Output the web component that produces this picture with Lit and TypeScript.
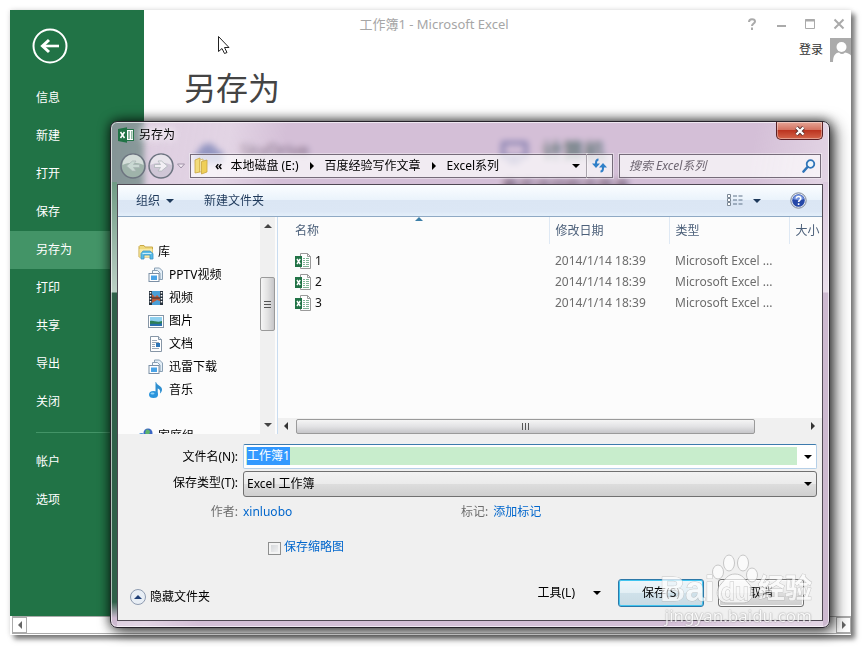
import { LitElement, html, css, svg } from "lit";
import { customElement, query } from "lit/decorators.js";
import { classMap } from "lit/directives/class-map.js";

const menu = ["信息", "新建", "打开", "保存", "另存为", "打印", "共享", "导出", "关闭"];
const accountMenu = ["帐户", "选项"];
const files = ["1", "2", "3"];

const stack = svg`
  <path d="M6.500 1h5l3 3v8.500h-8z" fill="#e3eef7" stroke="#8aa0b4"/>
  <path d="M4.500 3.500h5l2.500 2.500v6.500H4.500z" fill="#f6fafd" stroke="#8aa0b4"/>
  <rect x="1" y="6.500" width="10" height="8" fill="#fff" stroke="#7b8fa5"/>
  <rect x="3" y="8.500" width="6" height="4.500" fill="#4aa3e6"/>`;
const icons = {
  library: svg`
    <path d="M1 2.500 2 1.500h4l1 1.500h7.500v10H1z" fill="#efd97c" stroke="#c9a948"/>
    <path d="M1.500 5h13v8h-13z" fill="#f8e9a4"/>
    <path d="M3 15V9.500L5 7h7l3 2.500V15h-3v-4H6v4z" fill="#58bce8" stroke="#3a93c4" stroke-width=".8"/>
    <path d="M4.500 9.500h9" stroke="#c8effc"/>`,
  stack,
  video: svg`
    <rect x="1" y="1" width="14" height="14" fill="#26313c"/>
    <rect x="4" y="1" width="8" height="14" fill="#4b9fd6"/>
    <path d="M4 4l3 3 2-2 3 3v3l-3-1-5 3z" fill="#c25a35"/>
    <path d="M4 8h8" stroke="#26313c"/>
    <path d="M2.500 2v12M13.500 2v12" stroke="#fff" stroke-width="1.500" stroke-dasharray="1.500 1.500"/>`,
  picture: svg`
    <rect x=".5" y="2.500" width="15" height="12" fill="#fff" stroke="#8796a6"/>
    <rect x="2" y="4" width="12" height="9" fill="#8fd0ef"/>
    <path d="M2 8c4-1 7 2 12 0v5H2z" fill="#2e7f57"/>
    <path d="M2 11c4-1 8 1 12-1v3H2z" fill="#2a6fae"/>`,
  document: svg`
    <path d="M2.500.5h8l3 3v12h-11z" fill="#fff" stroke="#8796a6"/>
    <path d="M10.500.5v3h3" fill="#dfe8f0" stroke="#8796a6"/>
    <path d="M4 4.500h5M4 6.500h7M4 8.500h3M4 10.500h3M4 12.500h7" stroke="#9aa9b8"/>
    <rect x="8" y="7" width="4" height="4" fill="#2f77b8"/>`,
  music: svg`
    <path d="M8 0c1 3.500 6 4 6 7.500 0 1.700-.8 3-2 4 .7-3-.5-4.500-2.300-5V13H7.500V0z" fill="#2f8fd0"/>
    <ellipse cx="5.500" cy="12.500" rx="4.500" ry="3.500" fill="#2a94dc"/>
    <ellipse cx="4.500" cy="11.500" rx="2" ry="1" fill="#8fd3f8"/>`,
  homegroup: svg`
    <circle cx="10" cy="5" r="4.500" fill="#3b66c4"/>
    <path d="M8 2c2-1 4 0 4 2s-2 2-2 3-2-1-3-2z" fill="#5db46d"/>
    <circle cx="3.500" cy="8" r="3" fill="#4a90d8"/>`,
};

const tree: { icon: keyof typeof icons; label: string }[] = [
  { icon: "stack", label: "PPTV视频" },
  { icon: "video", label: "视频" },
  { icon: "picture", label: "图片" },
  { icon: "document", label: "文档" },
  { icon: "stack", label: "迅雷下载" },
  { icon: "music", label: "音乐" },
];

const small = (name: keyof typeof icons) =>
  html`<svg width="16" height="16" viewBox="0 0 16 16" aria-hidden="true">${icons[name]}</svg>`;
const tri = (dir: "down" | "up" | "left" | "right") => {
  const d = { down: "M0 2h8L4 6z", up: "M0 6h8L4 2z", left: "M6 0v8L2 4z", right: "M2 0v8l4-4z" }[dir];
  return html`<svg class="tri" width="8" height="8" viewBox="0 0 8 8" aria-hidden="true"><path d=${d} fill="currentColor"/></svg>`;
};

@customElement("app-root")
export class AppRoot extends LitElement {
  @query(".name-input") nameInput!: HTMLInputElement;

  static styles = css`
    :host {
      display: block;
      font: 12px/20px "Noto Sans", "Noto Sans CJK SC", sans-serif;
      color: #1a1a1a;
    }
    * { box-sizing: border-box; }
    svg { display: block; flex: none; }
    a { color: inherit; text-decoration: none; }
    button, input, select { font: inherit; color: inherit; margin: 0; padding: 0; border: 0; background: none; }
    ul { list-style: none; margin: 0; padding: 0; }

    .desk { display: grid; min-height: 100vh; padding: 10px 11px 12px 10px; background: #fff; overflow: hidden; }
    .window {
      position: relative; display: flex; flex-direction: column; background: #fff;
      box-shadow: 4px 4px 5px #777, 0 0 5px #ddd;
    }
    .backstage { flex: 1; display: flex; }
    .side { width: 134px; background: #217346; color: #fff; }
    .back { display: block; margin: 18px 0 15px 22px; }
    .back svg { width: 36px; height: 36px; }
    .side a { display: block; line-height: 38px; padding-left: 26px; }
    .side a.on { background: #439467; }
    .side hr { margin: 11px 0 10px 26px; border: 0; height: 1px; background: #439467; }

    .main { flex: 1; min-width: 0; display: flex; flex-direction: column; }
    .caption { display: flex; align-items: center; height: 28px; color: #a6a6a6; padding-right: 6px; margin-left: -134px; }
    .caption .name { flex: 1; text-align: center; padding-left: 112px; font-size: 13px; }
    .sys { display: flex; gap: 17px; }
    .sys button { width: 12px; height: 12px; }
    .login { display: flex; justify-content: flex-end; align-items: center; gap: 7px; height: 24px; color: #333; }
    h1 { font-size: 32px; line-height: 48px; font-weight: 400; margin: 2px 0 0 40px; color: #444; }
    .places { display: flex; margin: 28px 0 0 46px; font-size: 17px; color: #444; }
    .place { display: flex; flex: 0 0 308px; gap: 12px; }
    .place strong { font-size: 21px; color: #217346; }
    .place em { display: block; font-size: 16px; font-style: normal; margin: 14px 0 0 -40px; font-weight: 700; }

    .pagebar { display: flex; align-items: center; justify-content: space-between; height: 18px; border-top: 1px solid #ababab; border-bottom: 1px solid #ababab; margin: 0 0 1px 2px; color: #666; }
    .pagebar button { display: grid; place-items: center; width: 15px; height: 16px; border: 1px solid #ababab; }

    .dialog {
      position: absolute; left: 100px; right: 21px; top: 111px;
      padding: 0 6px 6px; border: 1px solid #26222a; border-radius: 7px;
      background:
        linear-gradient(#6f9a84, #bccfc5 110px, #2f6049 111px, #2f6049 420px, #cdb9d0 436px) 0 60px / 6px 100% no-repeat,
        linear-gradient(#dccadf, #eadfeb 110px, #cdb9d0 111px) 100% 60px / 6px 100% no-repeat,
        linear-gradient(100deg, #fff3, #fff5 15%, #fff0 22%, #fff0 80%, #fff5 90%),
        #aa80af80;
      backdrop-filter: blur(3px);
      box-shadow: inset 0 0 0 1px #ffffffa0, 0 0 12px #000b, 5px 3px 16px #0009;
    }
    .titlebar { display: flex; align-items: flex-start; height: 25px; }
    .titlebar svg.app { margin: 5px 0 0 1px; }
    .titlebar h2 { flex: 1; margin: 3px 0 0 5px; font: inherit; color: #000; text-shadow: 0 0 8px #fff, 0 0 6px #fff; }
    .close {
      display: grid; place-items: center; width: 47px; height: 18px;
      border: 1px solid #5a2024; border-top: 0; border-radius: 0 0 5px 5px;
      background: linear-gradient(#e6a596, #d2705e 48%, #bc3420 50%, #d4644a);
      box-shadow: inset 0 0 0 1px #ffffff60;
    }
    .nav { display: flex; align-items: center; height: 37px; padding: 0 2px 0 3px; }
    .round { margin-right: 2px; }
    .nav .recent { color: #9f92a6; margin: 0 5px 0 1px; }
    .box { display: flex; align-items: center; height: 24px; border: 1px solid #766c7a; background: #ffffffb0; box-shadow: 0 0 0 1px #ffffff60; }
    .address { flex: 1; min-width: 0; padding: 0 6px 0 3px; white-space: nowrap; color: #000; }
    .address svg.folder { margin-right: 6px; }
    .crumb { display: flex; align-items: center; }
    .crumb .tri { margin: 0 9px; }
    .address .spacer { flex: 1; }
    .laquo { margin-right: 8px; font-weight: 700; }
    .refresh { width: 26px; border-left: 0; justify-content: center; margin-right: 6px; }
    .search { width: 202px; padding: 0 4px 0 9px; }
    .search input { flex: 1; min-width: 0; font-style: italic; outline: 0; }
    .search input::placeholder { color: #6e6672; opacity: 1; }

    .client { border: 1px solid #4f4853; background: #f0f0f0; overflow: hidden; }
    .tools {
      display: flex; align-items: center; height: 32px; padding: 0 15px 0 18px; color: #1e395b;
      background: linear-gradient(#fbfdff, #eaf3fb 48%, #dbe6f4 50%, #dce7f5 85%, #e4effa);
      border-bottom: 1px solid #8fa9c4;
    }
    .tools button { display: flex; align-items: center; gap: 6px; }
    .tools .new { flex: 1; margin-left: 30px; }
    .tools .view { gap: 10px; margin-right: 29px; }

    .body { display: flex; height: 217px; background: #fcfcfc; }
    .tree { width: 142px; overflow: hidden; padding-top: 23px; color: #000; }
    .tree li { display: flex; align-items: center; height: 23px; gap: 5px; padding-left: 30px; white-space: nowrap; }
    .tree li.root { padding-left: 20px; gap: 4px; }
    .tree li.group { padding-left: 20px; gap: 4px; margin-top: 23px; }
    .vbar { display: flex; flex-direction: column; align-items: center; width: 15px; background: #f0f0f0; color: #444; padding: 5px 0; }
    .vthumb { width: 15px; height: 54px; margin: 47px 0 auto; border: 1px solid #9a9a9a; border-radius: 2px; background: linear-gradient(90deg, #f6f6f6, #e2e2e2 50%, #c6c6c9); display: grid; place-items: center; }
    .list { flex: 1; min-width: 0; margin-left: 2px; border-left: 1px solid #c9dcf0; display: flex; flex-direction: column; overflow: hidden; }
    table { width: 100%; border-collapse: collapse; table-layout: fixed; }
    th, td { padding: 0 0 0 6px; text-align: left; font-weight: 400; white-space: nowrap; overflow: hidden; color: #6d6d6d; }
    th { height: 27px; color: #4c607a; border-right: 1px solid #dfe9f4; position: relative; }
    th:last-child { border-right: 0; }
    th:first-child, td:first-child { padding-left: 17px; }
    th .sort { position: absolute; left: 137px; top: 0; color: #3c7fa8; }
    .gap td { height: 6px; }
    td { height: 21px; }
    td .file { display: flex; align-items: center; gap: 4px; color: #111; }
    .c-mid { width: 120px; }
    .c-end { width: 33px; }
    .hbar { display: flex; align-items: center; height: 16px; margin-top: auto; padding: 0 5px 0 4px; background: #f0f0f0; color: #333; }
    .hthumb { width: 459px; height: 15px; margin: 0 auto 0 6px; border: 1px solid #9a9a9a; border-radius: 2px; background: linear-gradient(#f5f5f5, #e2e2e4 50%, #c6c6c9); display: grid; place-items: center; }

    form { display: grid; grid-template-columns: 120px minmax(0, 1fr); column-gap: 5px; padding: 10px 5px 13px 0; color: #000; }
    form > label, .dim { text-align: right; align-self: center; }
    .dim { color: #6d6d6d; }
    .combo { display: flex; height: 25px; padding: 2px; border: 1px solid #b5cfe7; border-top-color: #3d7bad; background: #fff; border-radius: 2px; }
    .name-input { flex: 1; min-width: 0; height: 18px; padding-left: 1px; background: #c8edcc; outline: 0; caret-color: transparent; }
    .name-input::selection { background: #3399ff; color: #fff; }
    .combo button { width: 17px; display: grid; place-items: center end; padding-right: 2px; }
    .pick { position: relative; display: grid; align-items: center; margin-top: 2px; }
    select { appearance: none; width: 100%; height: 26px; padding-left: 3px; border: 1px solid #707070; border-radius: 3px; background: linear-gradient(#f2f2f2, #ebebeb 48%, #dddddd 50%, #cfcfcf); outline: 0; }
    .pick .tri { position: absolute; right: 5px; pointer-events: none; }
    .meta { display: flex; height: 29px; align-items: center; }
    .meta span { color: #6d6d6d; margin-right: 5px; }
    .meta a { color: #0066cc; }
    .meta .author { width: 218px; }
    .thumb { grid-column: 2; display: flex; align-items: center; gap: 3px; margin: 11px 0 22px 25px; height: 20px; color: #0066cc; }
    .thumb input { appearance: none; width: 13px; height: 13px; border: 1px solid #8e8f8f; background: linear-gradient(135deg, #cfd2d6, #f6f6f6); box-shadow: inset 0 0 0 2px #f4f4f4; margin-top: 2px; }
    .foot { grid-column: 1 / -1; display: flex; align-items: center; height: 28px; padding: 0 13px 0 12px; }
    .hide { display: flex; align-items: center; gap: 4px; flex: 1; align-self: flex-end; }
    .more { display: flex; align-items: center; gap: 18px; margin-right: 17px; }
    .btn { width: 86px; height: 28px; border: 1px solid #707070; border-radius: 3px; background: linear-gradient(#f3f3f3, #ebebeb 48%, #dddddd 50%, #cfcfcf); box-shadow: inset 0 0 0 1px #fcfcfc; margin-left: 14px; }
    .btn.primary { margin-left: 0; border-color: #2c78a8; box-shadow: inset 0 0 0 1px #41c5f0; background: linear-gradient(#eef6fa, #e3eff5 48%, #cfe1ea 50%, #c9dbe4); }

    .mark { position: absolute; right: 17px; bottom: 1px; width: 152px; color: #fff; opacity: .7; pointer-events: none; font-family: "Liberation Sans", "Noto Sans CJK SC", sans-serif; }
    .mark .row { display: flex; align-items: flex-end; justify-content: space-between; height: 52px; }
    .mark b { -webkit-text-stroke: 1px #b4b4b4; paint-order: stroke fill; }
    .mark .bai { font-size: 35px; line-height: 34px; }
    .mark .cn { font-size: 27px; line-height: 34px; }
    .mark .paw { position: absolute; left: 50px; top: 0; }
    .mark .du { position: absolute; left: 61px; top: 24px; font-size: 23px; line-height: 28px; }
    .mark .url { font: 17px/20px "Noto Sans", sans-serif; text-align: right; white-space: nowrap; text-shadow: 0 0 1px #888, 0 0 2px #888; }
    .pointer { position: absolute; left: 207px; top: 25px; }
  `;

  firstUpdated() {
    this.nameInput.focus();
    this.nameInput.select();
  }

  private sheet() {
    return html`<svg width="16" height="16" viewBox="0 0 16 16" aria-hidden="true">
      <path d="M5.500.5h7l3 3v12h-10z" fill="#fff" stroke="#9a9a9a"/>
      <path d="M12.500.5v3h3" fill="none" stroke="#9a9a9a"/>
      <path d="M8 5.500h2M8 7.500h2M8 9.500h2M8 11.500h2M11 5.500h3M11 7.500h3M11 9.500h3M11 11.500h3M8 13.500h6" stroke="#7fb495"/>
      <path d="M0 3h7v11H0z" fill="#217346"/>
      <path d="M2 6l3.200 5M5.200 6 2 11" stroke="#fff" stroke-width="1.400"/>
    </svg>`;
  }

  private round(forward: boolean) {
    const d = forward
      ? "M6.500 11.500h6L10 8h3.500l6 5-6 5H10l2.500-3.500h-6z"
      : "M19.500 11.500h-6L16 8h-3.500l-6 5 6 5H16l-2.500-3.500h6z";
    return html`<button class="round" type="button" aria-label=${forward ? "前进" : "后退"}>
      <svg width="26" height="26" viewBox="0 0 26 26">
        <circle cx="13" cy="13" r="12" fill=${forward ? "#cfc6d6" : "#9fb3aa"} stroke="#6d7480" stroke-width="1.500"/>
        <path d="M2.500 12a10.500 10.500 0 0 1 21 0c-6-3-15-3-21 0z" fill="#fff" fill-opacity=".55"/>
        <path d=${d} fill=${forward ? "#f2eff4" : "#c9d8d2"} stroke="#a9b3b5" stroke-width=".7"/>
      </svg>
    </button>`;
  }

  private renderDialog() {
    return html`<section class="dialog" role="dialog" aria-label="另存为">
      <header class="titlebar">
        <svg class="app" width="16" height="16" viewBox="0 0 16 16">
          <rect x="8" y="2.500" width="7.500" height="11" fill="#fff" stroke="#217346"/>
          <path d="M10 5h2M10 7h2M10 9h2M10 11h2M13 5h1.500M13 7h1.500M13 9h1.500M13 11h1.500" stroke="#217346"/>
          <path d="M0 2 9 .3v15.400L0 14z" fill="#217346"/>
          <path d="M2.500 5l4 6M6.500 5l-4 6" stroke="#fff" stroke-width="1.500"/>
        </svg>
        <h2>另存为</h2>
        <button class="close" type="button" aria-label="关闭">
          <svg width="12" height="10" viewBox="0 0 12 10"><path d="M2.500 1.500l7 7M9.500 1.500l-7 7" stroke="#5a3030" stroke-width="4"/><path d="M2.500 1.500l7 7M9.500 1.500l-7 7" stroke="#fff" stroke-width="2.400"/></svg>
        </button>
      </header>

      <div class="nav">
        ${this.round(false)}${this.round(true)}
        <span class="recent"><svg width="8" height="8" viewBox="0 0 8 8"><path d="M.5 2h7L4 6z" fill="#f3eaf4" stroke="#9f92a6"/></svg></span>
        <div class="box address">
          <svg class="folder" width="15" height="18" viewBox="0 0 15 18">
            <path d="M1 3l5-2v14l-5 1z" fill="#f3dc7a" stroke="#c9a640" stroke-width=".8"/>
            <path d="M6 3l3-1v13H6z" fill="#fff8d0" stroke="#c9a640" stroke-width=".6"/>
            <path d="M7.500 4.500 13 3v12l-5.500 2z" fill="#efcf58" stroke="#c9a640" stroke-width=".8"/>
          </svg>
          <span class="laquo">«</span>
          <span class="crumb">本地磁盘 (E:)${tri("right")}</span>
          <span class="crumb">百度经验写作文章${tri("right")}</span>
          <span class="crumb">Excel系列</span>
          <span class="spacer"></span>
          ${tri("down")}
        </div>
        <button class="box refresh" type="button" aria-label="刷新">
          <svg width="15" height="15" viewBox="0 0 15 15" fill="none" stroke="#2f7fc8" stroke-width="2">
            <path d="M6.500 1.500C4.500 1.500 4 3 4 5v2"/><path d="M0 5.500h8L4 10z" fill="#2f7fc8" stroke="none"/>
            <path d="M8.500 13.500c2 0 2.500-1.500 2.500-3.500V8"/><path d="M7 9.500h8L11 5z" fill="#2f7fc8" stroke="none"/>
          </svg>
        </button>
        <label class="box search">
          <input type="text" aria-label="搜索" placeholder="搜索 Excel系列" />
          <svg width="14" height="14" viewBox="0 0 14 14" fill="none" stroke="#2f74b8" stroke-width="1.800"><circle cx="8.500" cy="5" r="3.800" fill="#eef6fc"/><path d="M5.500 8 1.500 12.500" stroke-width="2.600" stroke-linecap="round"/></svg>
        </label>
      </div>

      <div class="client">
        <div class="tools">
          <button type="button">组织 ${tri("down")}</button>
          <button type="button" class="new">新建文件夹</button>
          <button type="button" class="view" aria-label="更改视图">
            <svg width="16" height="13" viewBox="0 0 16 13"><path d="M.5.500h3v3h-3zM.5 4.500h3v3h-3zM.5 8.500h3v3h-3z" fill="#fff" stroke="#7a8794"/><path d="M6 2h4M11.500 2h4M6 6h4M11.500 6h4M6 10h4M11.500 10h4" stroke="#5f7388"/></svg>
            ${tri("down")}
          </button>
          <button type="button" aria-label="帮助">
            <svg width="17" height="17" viewBox="0 0 17 17"><circle cx="8.500" cy="8.500" r="7.700" fill="#e9edf4" stroke="#7c8698"/><circle cx="8.500" cy="8.500" r="6.300" fill="#2648a8"/><path d="M3 7a5.700 5.700 0 0 1 11 0c-3 1.500-8 1.500-11 0z" fill="#6f8fdc"/><path d="M6.300 6.600c0-3 4.500-2.700 4.500-.2 0 1.600-2.200 1.700-2.200 3.500M8.600 11.200v1.800" fill="none" stroke="#fff" stroke-width="1.600"/></svg>
          </button>
        </div>

        <div class="body">
          <ul class="tree">
            <li class="root">${small("library")}库</li>
            ${tree.map((t) => html`<li>${small(t.icon)}${t.label}</li>`)}
            <li class="group">${small("homegroup")}家庭组</li>
          </ul>
          <div class="vbar">
            ${tri("up")}
            <div class="vthumb"><svg width="7" height="9" viewBox="0 0 7 9"><path d="M0 1.500h7M0 4.500h7M0 7.500h7" stroke="#555"/></svg></div>
            ${tri("down")}
          </div>
          <div class="list">
            <table>
              <colgroup><col /><col class="c-mid" /><col class="c-mid" /><col class="c-end" /></colgroup>
              <thead>
                <tr>
                  <th>名称<svg class="sort" width="8" height="4" viewBox="0 0 8 4"><path d="M0 4h8L4 0z" fill="currentColor"/></svg></th>
                  <th>修改日期</th><th>类型</th><th>大小</th>
                </tr>
              </thead>
              <tbody>
                <tr class="gap"><td colspan="4"></td></tr>
                ${files.map((f) => html`<tr>
                  <td><span class="file">${this.sheet()}${f}</span></td>
                  <td>2014/1/14 18:39</td><td>Microsoft Excel ...</td><td></td>
                </tr>`)}
              </tbody>
            </table>
            <div class="hbar">
              ${tri("left")}
              <div class="hthumb"><svg width="9" height="7" viewBox="0 0 9 7"><path d="M1.500 0v7M4.500 0v7M7.500 0v7" stroke="#555"/></svg></div>
              ${tri("right")}
            </div>
          </div>
        </div>

        <form @submit=${(e: Event) => e.preventDefault()}>
          <label for="fname">文件名(N):</label>
          <div class="combo">
            <input id="fname" class="name-input" type="text" value="工作簿1" autocomplete="off" spellcheck="false" />
            <button type="button" aria-label="展开">${tri("down")}</button>
          </div>
          <label for="ftype">保存类型(T):</label>
          <div class="pick">
            <select id="ftype"><option>Excel 工作簿</option></select>${tri("down")}
          </div>
          <span class="dim">作者:</span>
          <div class="meta">
            <div class="author"><a href="#author">xinluobo</a></div>
            <span>标记:</span><a href="#tags">添加标记</a>
          </div>
          <label class="thumb"><input type="checkbox" />保存缩略图</label>
          <div class="foot">
            <button type="button" class="hide">
              <svg width="16" height="16" viewBox="0 0 16 16"><circle cx="8" cy="8" r="7.500" fill="#e8eef5" stroke="#8e9bb0"/><path d="M4 10h8L8 6z" fill="#1f3f77"/></svg>
              隐藏文件夹
            </button>
            <button type="button" class="more">工具(L) ${tri("down")}</button>
            <button type="submit" class="btn primary">保存(S)</button>
            <button type="button" class="btn">取消</button>
          </div>
        </form>
      </div>

      <div class="mark">
        <div class="row"><b class="bai">Bai</b><b class="cn">经验</b></div>
        <svg class="paw" width="50" height="52" viewBox="0 0 50 52" fill="#fff" stroke="#b4b4b4">
          <ellipse cx="8" cy="18" rx="5.500" ry="7"/><ellipse cx="19" cy="9" rx="5.500" ry="8"/>
          <ellipse cx="33" cy="9" rx="5.500" ry="8"/><ellipse cx="42" cy="21" rx="5.500" ry="7"/>
          <path d="M25 20c8 0 10 6 14 10 7 7 4 19-6 19H17C7 49 4 37 11 30c4-4 6-10 14-10z"/>
        </svg>
        <b class="du">du</b>
        <div class="url">jingyan.baidu.com</div>
      </div>
    </section>`;
  }

  render() {
    const item = (m: string) => html`<a href="#menu" class=${classMap({ on: m === "另存为" })}>${m}</a>`;
    return html`<div class="desk">
      <div class="window">
        <div class="backstage">
          <nav class="side">
            <button class="back" type="button" aria-label="返回">
              <svg viewBox="0 0 36 36" fill="none" stroke="#fff"><circle cx="18" cy="18" r="16.500" stroke-width="2"/><path d="M27 18H11" stroke-width="2.600"/><path d="M17 12l-6.500 6 6.500 6" stroke-width="3"/></svg>
            </button>
            ${menu.map(item)}
            <hr />
            ${accountMenu.map(item)}
          </nav>
          <main class="main">
            <div class="caption">
              <span class="name">工作簿1 - Microsoft Excel</span>
              <div class="sys">
                <button type="button" aria-label="帮助"><svg width="12" height="12" viewBox="0 0 12 12" fill="none" stroke="#aaa" stroke-width="2"><path d="M3 4c0-4 6-3.500 6-.5 0 2-3 2-3 4.500M6 9.500V12"/></svg></button>
                <button type="button" aria-label="最小化"><svg width="12" height="12" viewBox="0 0 12 12"><path d="M2 8h9" stroke="#aaa" stroke-width="2"/></svg></button>
                <button type="button" aria-label="最大化"><svg width="12" height="12" viewBox="0 0 12 12"><path d="M1.500 1.500h9v9h-9z" fill="none" stroke="#aaa"/><path d="M1 2.500h10" stroke="#aaa" stroke-width="2"/></svg></button>
                <button type="button" aria-label="关闭"><svg width="12" height="12" viewBox="0 0 12 12"><path d="M1.500 1.500l9 9M10.500 1.500l-9 9" stroke="#aaa" stroke-width="2"/></svg></button>
              </div>
            </div>
            <div class="login">登录
              <svg width="21" height="24" viewBox="0 0 21 24"><rect width="21" height="24" fill="#ababab"/><circle cx="11.500" cy="9" r="5" fill="#fff"/><path d="M3 24c0-6 2-9 6-9.500 2 2 4 2 6 0 3 .5 5 1.500 6 3V24z" fill="#fff"/></svg>
            </div>
            <h1>另存为</h1>
            <div class="places" aria-hidden="true">
              <div class="place"><svg width="38" height="24" viewBox="0 0 38 24"><path d="M6 24a6 6 0 0 1 2-11C10 2 24 0 27 10c9 0 9 13 2 14z" fill="#1d4f9c"/></svg>SkyDrive</div>
              <div class="place"><svg width="32" height="24" viewBox="0 0 32 24" fill="none" stroke="#3a5f9c" stroke-width="3"><rect x="5" y="3" width="23" height="14"/><path d="M10 22h12"/></svg><span><strong>计算机</strong><em>最近访问的文件夹</em></span></div>
            </div>
          </main>
        </div>
        <div class="pagebar">
          <button type="button" aria-label="向左滚动">${tri("left")}</button>
          <button type="button" aria-label="向右滚动">${tri("right")}</button>
        </div>
        ${this.renderDialog()}
        <svg class="pointer" width="14" height="20" viewBox="0 0 14 20"><path d="M1.500 1.500v15l3.500-3 2.500 5 2.500-1-2.500-5H12z" fill="#fff" stroke="#222"/></svg>
      </div>
    </div>`;
  }
}
